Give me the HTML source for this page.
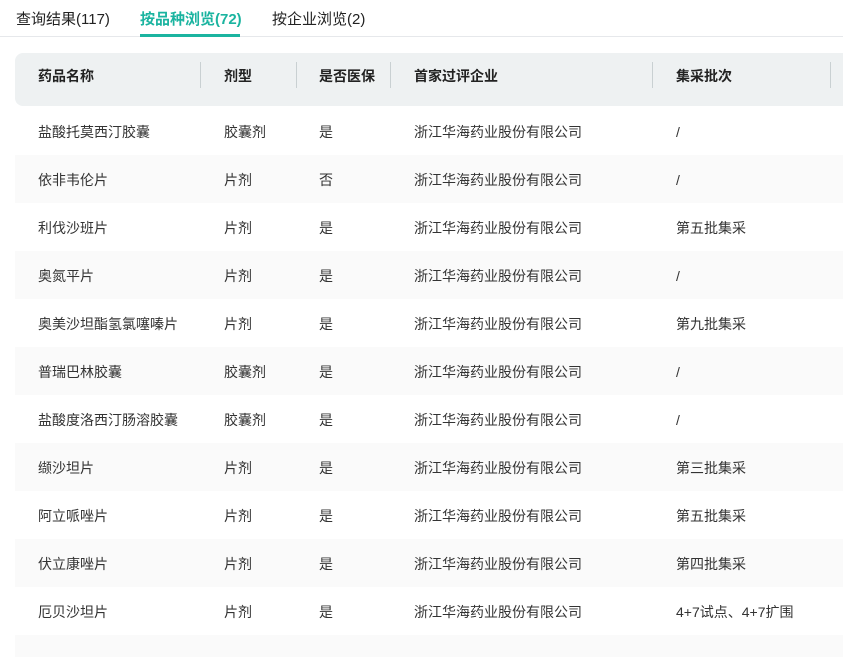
<!DOCTYPE html>
<html><head><meta charset="utf-8"><style>
*{margin:0;padding:0;box-sizing:border-box}
html,body{width:843px;height:657px;overflow:hidden}
body{background:#fff;font-family:"Liberation Sans","Noto Sans CJK SC",sans-serif;color:#333;font-size:14px;position:relative}
.tabs{position:absolute;top:0;left:0;width:843px;height:37px;border-bottom:1px solid #e6e8eb}
.tab{position:absolute;top:8px;font-size:15px;color:#222}
.tab.on{color:#1bb4a0;font-weight:bold}
.ul{position:absolute;left:140px;top:34px;width:100px;height:3px;background:#1bb4a0}
.head{position:absolute;left:15px;top:53px;width:840px;height:53px;background:#eef1f2;border-radius:8px 0 0 8px;font-weight:bold;color:#222}
.c{position:absolute;white-space:nowrap}
.sep{position:absolute;top:9px;width:1px;height:26px;background:#c9d0d2}
.row{position:absolute;left:15px;width:840px;height:48px}
.row.s{background:#fafafa}
.row .c{top:50%;transform:translateY(-45%)}
.head .c{top:13px}
</style></head><body>
<div class="tabs">
<div class="tab" style="left:16px">查询结果(117)</div>
<div class="tab on" style="left:140px">按品种浏览(72)</div>
<div class="tab" style="left:272px">按企业浏览(2)</div>
<div class="ul"></div>
</div>
<div class="head">
<div class="c" style="left:23px">药品名称</div>
<div class="sep" style="left:185px"></div>
<div class="c" style="left:209px">剂型</div>
<div class="sep" style="left:281px"></div>
<div class="c" style="left:304px">是否医保</div>
<div class="sep" style="left:375px"></div>
<div class="c" style="left:399px">首家过评企业</div>
<div class="sep" style="left:637px"></div>
<div class="c" style="left:661px">集采批次</div>
<div class="sep" style="left:815px"></div>
</div>
<div class="row" style="top:107px"><div class="c" style="left:23px">盐酸托莫西汀胶囊</div><div class="c" style="left:209px">胶囊剂</div><div class="c" style="left:304px">是</div><div class="c" style="left:399px">浙江华海药业股份有限公司</div><div class="c" style="left:661px">/</div></div>
<div class="row s" style="top:155px"><div class="c" style="left:23px">依非韦伦片</div><div class="c" style="left:209px">片剂</div><div class="c" style="left:304px">否</div><div class="c" style="left:399px">浙江华海药业股份有限公司</div><div class="c" style="left:661px">/</div></div>
<div class="row" style="top:203px"><div class="c" style="left:23px">利伐沙班片</div><div class="c" style="left:209px">片剂</div><div class="c" style="left:304px">是</div><div class="c" style="left:399px">浙江华海药业股份有限公司</div><div class="c" style="left:661px">第五批集采</div></div>
<div class="row s" style="top:251px"><div class="c" style="left:23px">奥氮平片</div><div class="c" style="left:209px">片剂</div><div class="c" style="left:304px">是</div><div class="c" style="left:399px">浙江华海药业股份有限公司</div><div class="c" style="left:661px">/</div></div>
<div class="row" style="top:299px"><div class="c" style="left:23px">奥美沙坦酯氢氯噻嗪片</div><div class="c" style="left:209px">片剂</div><div class="c" style="left:304px">是</div><div class="c" style="left:399px">浙江华海药业股份有限公司</div><div class="c" style="left:661px">第九批集采</div></div>
<div class="row s" style="top:347px"><div class="c" style="left:23px">普瑞巴林胶囊</div><div class="c" style="left:209px">胶囊剂</div><div class="c" style="left:304px">是</div><div class="c" style="left:399px">浙江华海药业股份有限公司</div><div class="c" style="left:661px">/</div></div>
<div class="row" style="top:395px"><div class="c" style="left:23px">盐酸度洛西汀肠溶胶囊</div><div class="c" style="left:209px">胶囊剂</div><div class="c" style="left:304px">是</div><div class="c" style="left:399px">浙江华海药业股份有限公司</div><div class="c" style="left:661px">/</div></div>
<div class="row s" style="top:443px"><div class="c" style="left:23px">缬沙坦片</div><div class="c" style="left:209px">片剂</div><div class="c" style="left:304px">是</div><div class="c" style="left:399px">浙江华海药业股份有限公司</div><div class="c" style="left:661px">第三批集采</div></div>
<div class="row" style="top:491px"><div class="c" style="left:23px">阿立哌唑片</div><div class="c" style="left:209px">片剂</div><div class="c" style="left:304px">是</div><div class="c" style="left:399px">浙江华海药业股份有限公司</div><div class="c" style="left:661px">第五批集采</div></div>
<div class="row s" style="top:539px"><div class="c" style="left:23px">伏立康唑片</div><div class="c" style="left:209px">片剂</div><div class="c" style="left:304px">是</div><div class="c" style="left:399px">浙江华海药业股份有限公司</div><div class="c" style="left:661px">第四批集采</div></div>
<div class="row" style="top:587px"><div class="c" style="left:23px">厄贝沙坦片</div><div class="c" style="left:209px">片剂</div><div class="c" style="left:304px">是</div><div class="c" style="left:399px">浙江华海药业股份有限公司</div><div class="c" style="left:661px">4+7试点、4+7扩围</div></div>
<div class="row s" style="top:635px;height:22px"></div>
</body></html>
